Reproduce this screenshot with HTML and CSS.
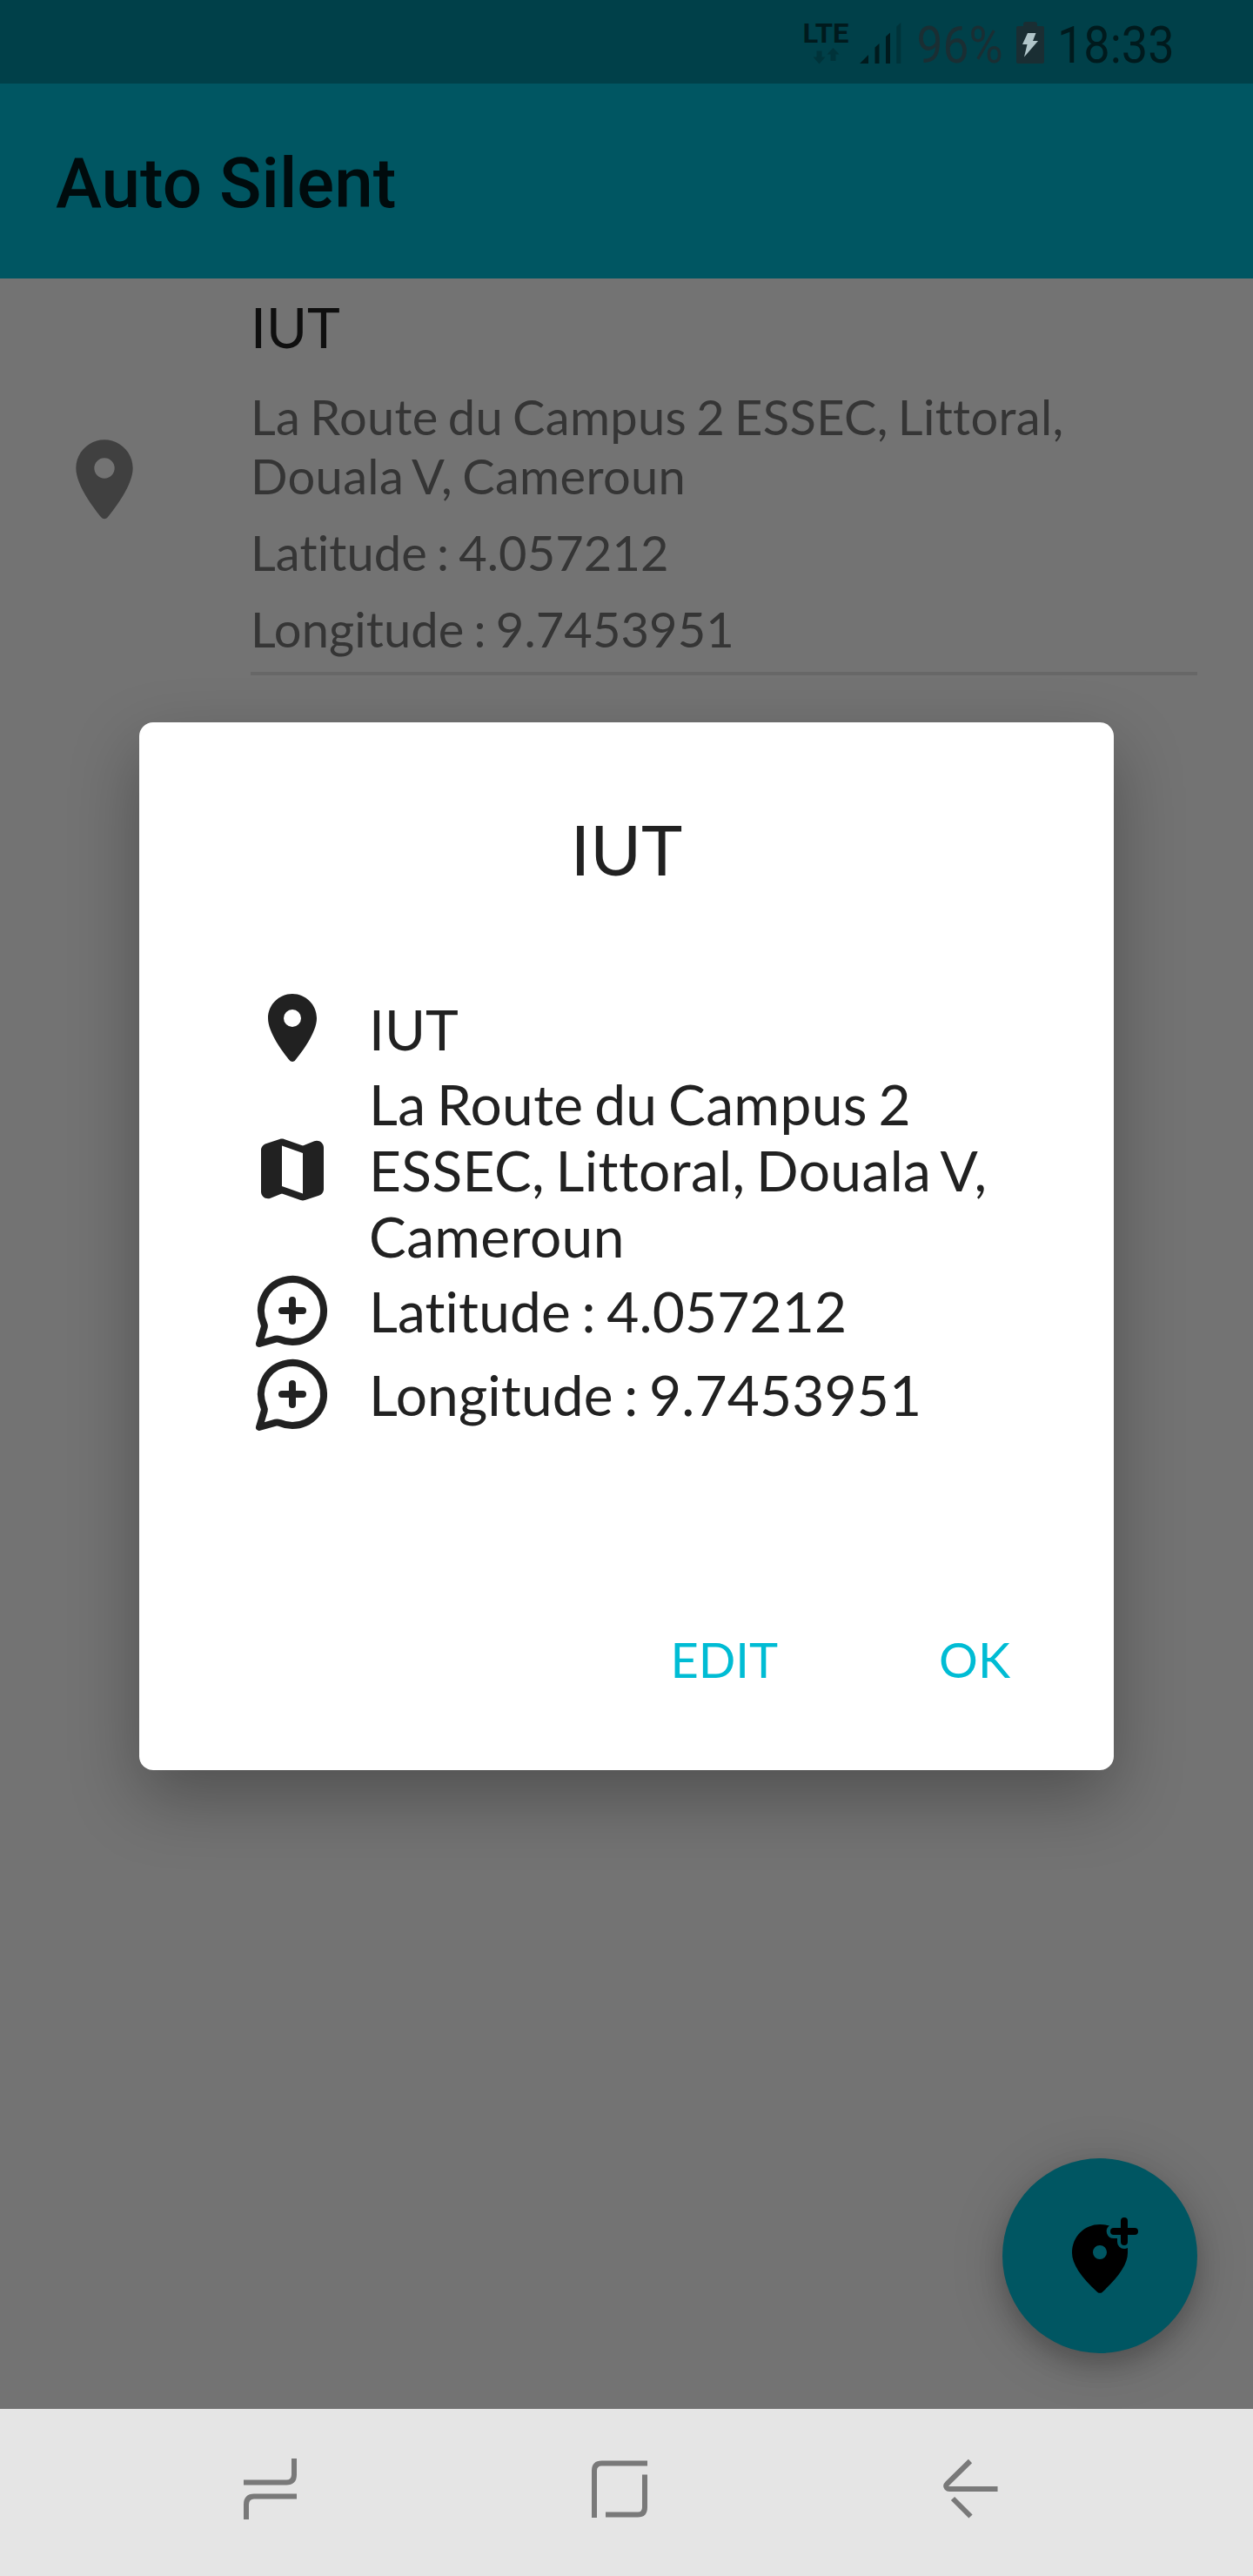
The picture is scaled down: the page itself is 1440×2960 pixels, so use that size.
FILE: index.html
```html
<!DOCTYPE html>
<html lang="fr">
<head>
<meta charset="utf-8">
<title>Auto Silent</title>
<link rel="stylesheet" href="styles.css">
</head>
<body>
<svg class="defs" width="0" height="0">
  <symbol id="place" viewBox="0 0 24 24">
    <path d="M12 2C8.13 2 5 5.13 5 9c0 4.17 4.42 9.92 6.24 12.11.4.48 1.13.48 1.53 0C14.58 18.92 19 13.17 19 9c0-3.87-3.13-7-7-7zm0 9.5a2.5 2.5 0 0 1 0-5 2.5 2.5 0 0 1 0 5z"/>
  </symbol>
  <symbol id="bubble-plus" viewBox="0 0 24 24">
    <path fill="none" stroke="currentColor" stroke-width="2" stroke-linecap="round" stroke-linejoin="round" d="M12 21a9 9 0 1 0-8.2-5.3c.2.45.22.7.12 1.1L2.5 21.5l4.7-1.35c.4-.1.7-.08 1.2.1A9 9 0 0 0 12 21zM9 12h6M12 9v6"/>
  </symbol>
</svg>
<div class="screen">
  <div class="status-bar">
    <svg class="network" width="50" height="50" viewBox="924 25 50 50">
      <text class="lte" x="922.5" y="49" textLength="53" lengthAdjust="spacingAndGlyphs">LTE</text>
      <path class="faint" d="M938.500 58.500h6v7h4l-7 8-7-8h4zM954.500 70v-7.500h-4l7-7.500 7 7.500h-4V70z"/>
    </svg>
    <svg class="signal" width="48" height="50" viewBox="988 25 48 50">
      <path class="solid" d="M988 73l10-10v10zM1005.500 73V54.500l5-4.500v23zM1018 73V42l5-4.500V73z"/>
      <path class="faint" d="M1030.300 73V30.500l5-4.500v47z"/>
    </svg>
    <svg class="percent" width="96" height="50" viewBox="1056 25 96 50">
      <text class="muted" x="1053.500" y="72" textLength="99" lengthAdjust="spacingAndGlyphs">96%</text>
    </svg>
    <svg class="battery" width="32" height="48" viewBox="0 0 32 48">
      <path class="muted" d="M2 5h6V3q0-3 3-3h10q3 0 3 3v2h6q2 0 2 2v39q0 2-2 2H2q-2 0-2-2V7q0-2 2-2z"/>
      <path class="bolt" d="M13 13h9.500l-3.500 9h6L9 40.500l3.500-14.500H7z"/>
    </svg>
    <svg class="clock" width="130" height="50" viewBox="1218 25 130 50">
      <text class="solid" x="1215" y="72" textLength="134.500" lengthAdjust="spacingAndGlyphs">18:33</text>
    </svg>
  </div>
  <div class="app-bar"><h1>Auto Silent</h1></div>
  <div class="content">
    <div class="item">
      <svg class="item-icon"><use href="#place"/></svg>
      <div class="item-body">
        <div class="item-title">IUT</div>
        <p class="address">La Route du Campus 2 ESSEC, Littoral, Douala V, Cameroun</p>
        <p class="coordinate">Latitude : 4.057212</p>
        <p class="coordinate">Longitude : 9.7453951</p>
      </div>
    </div>
    <div class="fab">
      <svg width="96" height="96" viewBox="0 0 24 24">
        <path d="M14.750 3.400A9 9 0 0 0 12 3C7.600 3 4 6.400 4 11.200c0 3.100 2.500 6.900 7.340 11.270.38.33.95.33 1.330 0C17.500 18.100 20 14.300 20 11.200V9.730c-.3.17-.65.27-1 .27a2 2 0 0 1-2-2V7h-1a2 2 0 0 1-1.250-3.600zM12 13a2 2 0 0 1 0-4 2 2 0 0 1 0 4z"/>
        <path d="M16 5h6M19 2v6" fill="none" stroke="#000" stroke-width="2" stroke-linecap="round"/>
      </svg>
    </div>
  </div>
  <div class="nav-bar">
    <svg width="72" height="72" viewBox="0 0 72 72"><path d="M4 28.500h49q9 0 9-9V1M7 71V54q0-9.500 9-9.500h49"/></svg>
    <svg width="72" height="72" viewBox="0 0 72 72"><path d="M7 69V15q0-8.500 8.500-8.500H68M65 19.500V57q0 8.500-8 8.500H20"/></svg>
    <svg width="72" height="72" viewBox="0 0 72 72"><path d="M39 4L13 29.500q-3 3-1 5.200 1.200 1.300 3 1.300H70.500M19 47l20.500 20.500"/></svg>
  </div>
  <div class="dialog">
    <h2>IUT</h2>
    <div class="rows">
      <div class="row"><svg><use href="#place"/></svg><span>IUT</span></div>
      <div class="row">
        <svg viewBox="0 0 24 24"><path d="M14.650 4.980l-5-1.750c-.42-.15-.88-.15-1.300-.01L4.360 4.560C3.550 4.840 3 5.600 3 6.460v11.850c0 1.410 1.410 2.370 2.720 1.860l2.930-1.140c.22-.09.47-.09.69-.01l5 1.750c.42.15.88.15 1.300.01l3.990-1.340c.81-.27 1.370-1.040 1.370-1.900V5.690c0-1.410-1.410-2.370-2.720-1.860l-2.930 1.140c-.22.08-.46.09-.7.01zM15 18.890l-6-2.110V5.110l6 2.110v11.670z"/></svg>
        <span class="address">La Route du Campus 2 ESSEC, Littoral, Douala V, Cameroun</span>
      </div>
      <div class="row"><svg><use href="#bubble-plus"/></svg><span class="coordinate">Latitude : 4.057212</span></div>
      <div class="row"><svg><use href="#bubble-plus"/></svg><span class="coordinate">Longitude : 9.7453951</span></div>
    </div>
    <div class="actions"><span>EDIT</span><span>OK</span></div>
  </div>
</div>
</body>
</html>
```
FILE: styles.css
```css
* { box-sizing: border-box; }
body { margin: 0; font-family: Lato, sans-serif; font-variant-ligatures: none; }
h1, h2, p { margin: 0; font-weight: 400; }
svg { display: block; flex: none; }
.defs { position: absolute; }

.screen {
  position: relative;
  display: flex;
  flex-direction: column;
  width: 1440px;
  height: 2960px;
  overflow: hidden;
  background: #737373;
}

.status-bar {
  display: flex;
  height: 96px;
  padding: 25px 92px 0 0;
  justify-content: flex-end;
  background: #004049;
  font: 60px Roboto, sans-serif;
}
.status-bar svg { overflow: visible; }
.network { margin-right: 14px; }
.signal { margin-right: 20px; }
.percent { margin-right: 16px; }
.battery { margin-right: 18px; }
.lte { font: 700 30.500px Roboto, sans-serif; fill: #001a1d; }
.solid { fill: #001a1d; }
.faint { fill: #00333a; }
.muted { fill: #1a2e33; }
.bolt { fill: #b0c5c9; }

.app-bar {
  display: flex;
  align-items: center;
  height: 224px;
  padding: 6px 0 0 64px;
  background: #005662;
}
.app-bar h1 {
  font: 500 80px/94px Roboto, sans-serif;
  color: #000b0d;
}

.content {
  flex: 1;
  display: flex;
  flex-direction: column;
  justify-content: space-between;
}
.item {
  display: flex;
  align-items: center;
  height: 456px;
  padding: 0 64px;
}
.item-icon {
  width: 112px;
  height: 112px;
  margin: 8px 112px 0 0;
  fill: #404040;
}
.item-body {
  flex: 1;
  height: 456px;
  padding-top: 17px;
  border-bottom: 4px solid #676767;
  color: #353535;
  font-size: 56px;
  line-height: 68px;
}
.item-title {
  margin-bottom: 31px;
  color: #0f0f0f;
  font-size: 64px;
  line-height: 77px;
}
.item-body p + p { margin-top: 20px; }
.address { letter-spacing: .006em; word-spacing: -.065em; }
.coordinate { letter-spacing: .002em; word-spacing: -.06em; }

.fab {
  display: flex;
  align-items: center;
  justify-content: center;
  align-self: flex-end;
  width: 224px;
  height: 224px;
  margin: 0 64px 64px 0;
  border-radius: 50%;
  background: #005662;
  box-shadow: 0 14px 28px rgba(0, 0, 0, .2), 0 8px 64px rgba(0, 0, 0, .16);
}

.nav-bar {
  position: relative;
  display: flex;
  gap: 328px;
  height: 192px;
  padding: 56px 0 0 276px;
  background: #e5e5e5;
}
.nav-bar path { fill: none; stroke: #797979; stroke-width: 6; }

.dialog {
  position: absolute;
  top: 830px;
  left: 160px;
  width: 1120px;
  height: 1204px;
  padding: 97px 96px 0 128px;
  border-radius: 16px;
  background: #fff;
  color: #212121;
  box-shadow: 0 32px 80px rgba(0, 0, 0, .3);
}
.dialog h2 {
  padding-right: 32px;
  font-size: 80px;
  line-height: 96px;
  text-align: center;
}
.rows { margin-top: 111px; font-size: 64px; line-height: 76px; }
.row { display: flex; align-items: center; gap: 40px; }
.row svg { width: 96px; height: 96px; fill: currentColor; }
.row span { position: relative; top: 1px; }
.actions {
  display: flex;
  justify-content: flex-end;
  gap: 185px;
  margin: 223px 23px 0 0;
  color: #00bcd4;
  font-size: 56px;
  line-height: 67px;
}
```
